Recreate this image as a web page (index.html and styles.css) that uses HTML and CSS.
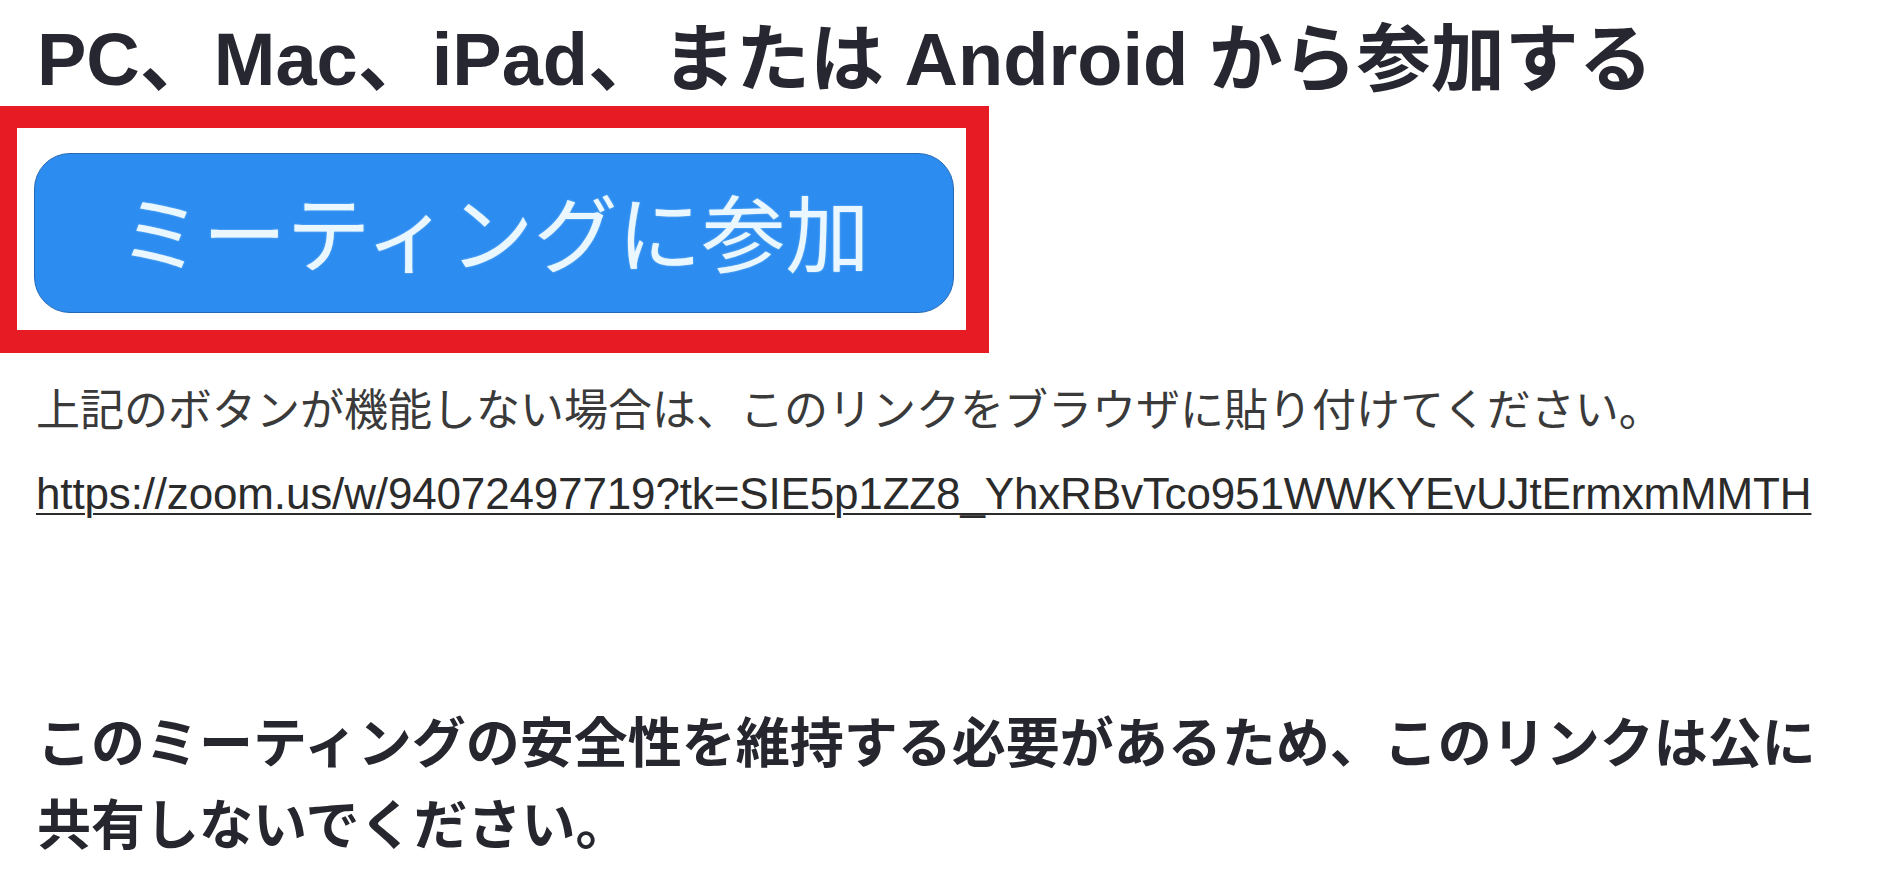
FILE: index.html
```html
<!DOCTYPE html>
<html lang="ja">
<head>
    <meta charset="UTF-8">
    <meta name="viewport" content="width=device-width, initial-scale=1.0">
    <title>ミーティングに参加</title>
    <link rel="stylesheet" href="styles.css">
</head>
<body>
<div class="mail">
    <h1 class="title">PC、Mac、iPad、または Android から参加する</h1>

    <div class="highlight">
        <a class="join-btn" href="#">ミーティングに参加</a>
    </div>

    <p class="hint">上記のボタンが機能しない場合は、このリンクをブラウザに貼り付けてください。</p>
    <p class="link-line">
        <a href="#">https://zoom.us/w/94072497719?tk=SIE5p1ZZ8_YhxRBvTco951WWKYEvUJtErmxmMMTH</a>
    </p>

    <p class="notice">このミーティングの安全性を維持する必要があるため、このリンクは公に共有しないでください。</p>
</div>
</body>
</html>
```

FILE: styles.css
```css
body {
    margin: 0;
    padding: 0;
    background: #ffffff;
    font-family: "Liberation Sans", Arial, "Noto Sans CJK JP", sans-serif;
    color: #26262f;
}

.mail {
    width: 1800px;
    padding-left: 36px;
}

.title {
    margin: 23px 0 9px 1px;
    font-size: 74px;
    line-height: 74px;
    font-weight: bold;
    color: #272731;
    white-space: nowrap;
}

/* red frame drawn round the join button */
.highlight {
    width: 920px;
    margin-left: -36px;
    border-style: solid;
    border-color: #e61b24;
    border-width: 22px 23px 23px 17px;
    padding: 25px 12px 17px 17px;
    background: #ffffff;
}

.join-btn {
    display: flex;
    align-items: center;
    justify-content: center;
    width: 920px;
    height: 160px;
    box-sizing: border-box;
    border: 1px solid #2569b3;
    border-radius: 36px;
    background: #2d8cf0;
    color: #eaf7ff;
    font-family: "Noto Sans CJK JP", sans-serif;
    font-size: 84px;
    text-decoration: none;
    text-shadow: 0 0 2px rgba(200, 240, 255, 0.6);
    padding-bottom: 8px;
}

.hint {
    margin: 28px 0 0 0;
    font-size: 44px;
    line-height: 60px;
    color: #3a3a3a;
    white-space: nowrap;
}

.link-line {
    margin: 23px 0 0 0;
    font-size: 44px;
    line-height: 60px;
    letter-spacing: -0.15px;
    white-space: nowrap;
}

.link-line a {
    color: #2b2b2b;
    text-decoration: underline;
    text-decoration-thickness: 2px;
    text-underline-offset: 4px;
}

.notice {
    margin: 179px 0 0 1px;
    font-size: 54px;
    line-height: 82px;
    font-weight: bold;
    color: #26262f;
}
```
